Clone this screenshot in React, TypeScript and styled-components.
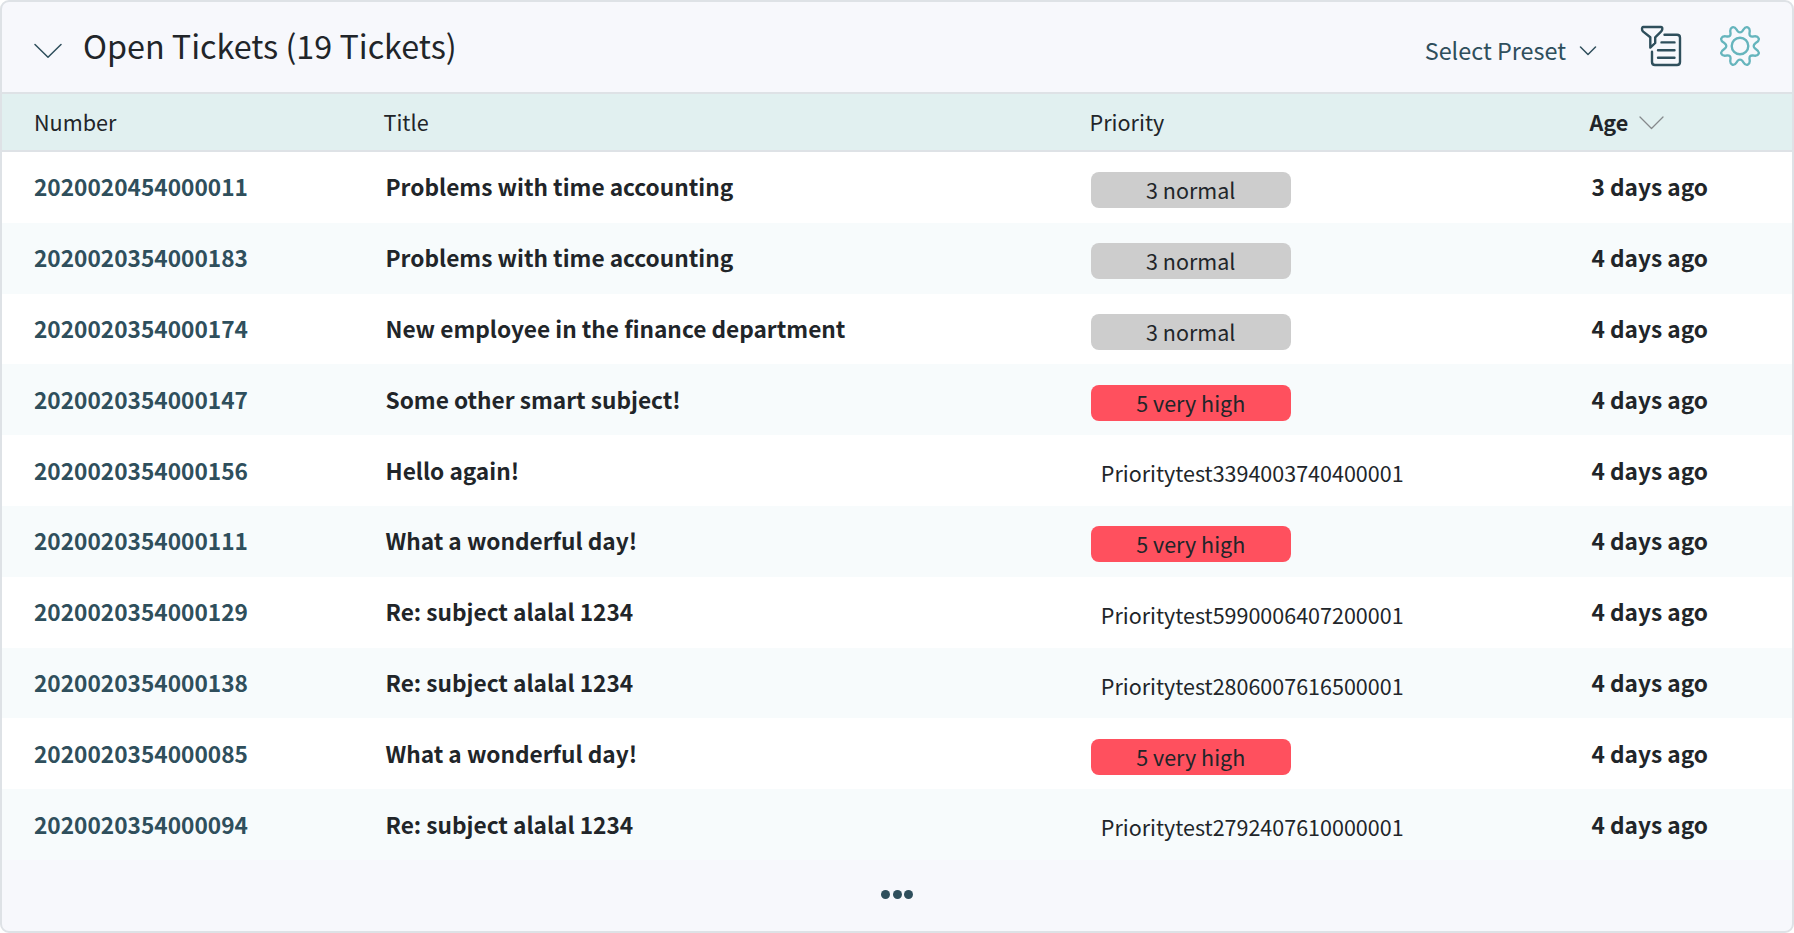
import React from "react";
import styled, { createGlobalStyle } from "styled-components";

const GlobalStyle = createGlobalStyle`
  *, *::before, *::after { box-sizing: border-box; }
  body {
    margin: 0;
    background: #fff;
    color: #212529;
    font-family: "Noto Sans CJK SC", "Noto Sans", sans-serif;
  }
`;

const Widget = styled.section`
  display: flex;
  flex-direction: column;
  width: 100%;
  height: 933px;
  border: 2px solid #dee2e6;
  border-radius: 9px;
  background: #f7f8fc;
  overflow: hidden;
`;

const Header = styled.header`
  display: flex;
  align-items: center;
  height: 92px;
  flex: none;
  padding: 0 31px 0 32px;
  border-bottom: 2px solid #dee2e6;
  color: #2f4f5c;
`;

const Heading = styled.h1`
  flex: 1;
  margin: 0 0 4px 19px;
  color: #212529;
  font-size: 32.3px;
  font-weight: 400;
  line-height: 86px;
`;

const Collapse = styled.svg`
  width: 30px;
  height: 16px;
  margin-top: 8px;
`;

const Preset = styled.div`
  display: flex;
  align-items: center;
  gap: 12.5px;
  margin-right: 43.5px;
  padding-top: 6px;
  font-size: 23.4px;
  line-height: 32px;

  svg {
    margin-top: 2px;
  }
`;

const Actions = styled.div`
  display: flex;
  gap: 37px;
  margin-bottom: 3px;
`;

const ActionIcon = styled.svg<{ $color: string }>`
  width: 42px;
  height: 42px;
  color: ${(p) => p.$color};
`;

const Row = styled.div`
  display: grid;
  grid-template-columns: 349.5px 706px 500px 1fr;
  padding-left: 32px;
`;

const HeadRow = styled(Row)`
  flex: none;
  height: 58px;
  background: #e1f0f0;
  border-bottom: 2px solid #dee2e6;
  font-size: 21.6px;
  line-height: 56px;
`;

const HeadCell = styled.div<{ $sorted?: boolean }>`
  display: flex;
  align-items: center;
  gap: 11px;
  font-weight: ${(p) => (p.$sorted ? 700 : 400)};

  svg {
    margin-top: 2px;
  }
`;

const Body = styled.div`
  flex: none;
`;

const TicketRow = styled(Row)`
  height: 70.8px;
  background: #fff;
  font-size: 22.66px;
  font-weight: 700;
  line-height: 70.8px;

  &:nth-child(even) {
    background: #f7fbfc;
  }
`;

const TicketNumber = styled.div`
  padding-top: 0.35px;
  color: #2f4f5c;
`;

const Cell = styled.div`
  padding: 0.35px 0 0 2px;
  white-space: nowrap;
`;

const Priority = styled.span<{ $color?: string }>`
  display: block;
  width: ${(p) => (p.$color ? "200px" : "auto")};
  height: 36px;
  margin: 20.15px 0 0 1.3px;
  padding: 0 10px;
  border-radius: 8px;
  background: ${(p) => p.$color ?? "transparent"};
  font-size: 21.5px;
  font-weight: 400;
  line-height: 35.8px;
  text-align: ${(p) => (p.$color ? "center" : "left")};
`;

const Footer = styled.footer`
  display: flex;
  flex: 1;
  align-items: center;
  justify-content: center;
  padding: 0 0 2px;
  gap: 2.6px;
`;

const Dot = styled.i`
  width: 9px;
  height: 9px;
  border-radius: 50%;
  background: #2f4f5c;
`;

const priorityColors: Record<string, string> = {
  "3 normal": "#cdcdcd",
  "5 very high": "#ff505e",
};

const tickets = [
  ["2020020454000011", "Problems with time accounting", "3 normal", "3 days ago"],
  ["2020020354000183", "Problems with time accounting", "3 normal", "4 days ago"],
  ["2020020354000174", "New employee in the finance department", "3 normal", "4 days ago"],
  ["2020020354000147", "Some other smart subject!", "5 very high", "4 days ago"],
  ["2020020354000156", "Hello again!", "Prioritytest3394003740400001", "4 days ago"],
  ["2020020354000111", "What a wonderful day!", "5 very high", "4 days ago"],
  ["2020020354000129", "Re: subject alalal 1234", "Prioritytest5990006407200001", "4 days ago"],
  ["2020020354000138", "Re: subject alalal 1234", "Prioritytest2806007616500001", "4 days ago"],
  ["2020020354000085", "What a wonderful day!", "5 very high", "4 days ago"],
  ["2020020354000094", "Re: subject alalal 1234", "Prioritytest2792407610000001", "4 days ago"],
];

export default function App() {
  return (
    <>
      <GlobalStyle />
      <Widget>
        <Header>
          <Collapse viewBox="0 0 30 16" fill="none" stroke="currentColor" strokeWidth="1.5" strokeLinecap="round" strokeLinejoin="round">
            <path d="M1 1.5 14 14.3 27 1.5" />
          </Collapse>
          <Heading>Open Tickets (19 Tickets)</Heading>
          <Preset>
            Select Preset
            <svg width="18" height="10" viewBox="0 0 18 10" fill="none" stroke="currentColor" strokeWidth="1.5" strokeLinecap="round" strokeLinejoin="round">
              <path d="M1.5 1 9 8.5 16.5 1" />
            </svg>
          </Preset>
          <Actions>
            <ActionIcon $color="#2f4f5c" viewBox="0 0 42 42" fill="none" stroke="currentColor" strokeWidth="2.4" strokeLinecap="round" strokeLinejoin="round">
              <path d="M3.2 2H20.8Q22.5 2 22.3 4.2 22.2 5.5 21 6.6L15.2 12.3V18L10.3 22.6V12.3L3.2 6.6Q2 5.5 2 4 2 2 3.2 2Z" />
              <path d="M24.5 9.8H37Q40 9.8 40 12.8V37Q40 40 37 40H15Q12 40 12 37V26.8" />
              <path d="M21.5 17.4H34.5M18 25.2H34.5M18 32.8H34.5" />
            </ActionIcon>
            <ActionIcon $color="#66b5bd" viewBox="0 0 42 42" fill="none" stroke="currentColor" strokeWidth="2.4" strokeLinejoin="round">
              <circle cx="21" cy="21" r="8.3" />
              <path transform="translate(21 21) scale(.97) translate(-21 -21)" d="M13 1.8C15.5 .5 17 3.5 18.1 5.1 19.8 7.5 22.2 7.5 23.9 5.1 25 3.5 26.5 .5 29 1.8 32 3.1 31 5.5 30.8 7.6 30.5 10.3 31.7 11.5 34.4 11.2 36.5 11 38.9 10 40.2 13 41.5 15.5 38.5 17 36.9 18.1 34.5 19.8 34.5 22.2 36.9 23.9 38.5 25 41.5 26.5 40.2 29 38.9 32 36.5 31 34.4 30.8 31.7 30.5 30.5 31.7 30.8 34.4 31 36.5 32 38.9 29 40.2 26.5 41.5 25 38.5 23.9 36.9 22.2 34.5 19.8 34.5 18.1 36.9 17 38.5 15.5 41.5 13 40.2 10 38.9 11 36.5 11.2 34.4 11.5 31.7 10.3 30.5 7.6 30.8 5.5 31 3.1 32 1.8 29 .5 26.5 3.5 25 5.1 23.9 7.5 22.2 7.5 19.8 5.1 18.1 3.5 17 .5 15.5 1.8 13 3.1 10 5.5 11 7.6 11.2 10.3 11.5 11.5 10.3 11.2 7.6 11 5.5 10 3.1 13 1.8Z" />
            </ActionIcon>
          </Actions>
        </Header>
        <HeadRow>
          <HeadCell>Number</HeadCell>
          <HeadCell>Title</HeadCell>
          <HeadCell>Priority</HeadCell>
          <HeadCell $sorted>
            Age
            <svg width="25" height="14" viewBox="0 0 25 14" fill="none" stroke="#85898c" strokeWidth="1.3" strokeLinecap="round" strokeLinejoin="round">
              <path d="M1 1 12.5 12.5 24 1" />
            </svg>
          </HeadCell>
        </HeadRow>
        <Body>
          {tickets.map(([number, title, priority, age]) => (
            <TicketRow key={number}>
              <TicketNumber>{number}</TicketNumber>
              <Cell>{title}</Cell>
              <div>
                <Priority $color={priorityColors[priority]}>{priority}</Priority>
              </div>
              <Cell>{age}</Cell>
            </TicketRow>
          ))}
        </Body>
        <Footer>
          <Dot />
          <Dot />
          <Dot />
        </Footer>
      </Widget>
    </>
  );
}
